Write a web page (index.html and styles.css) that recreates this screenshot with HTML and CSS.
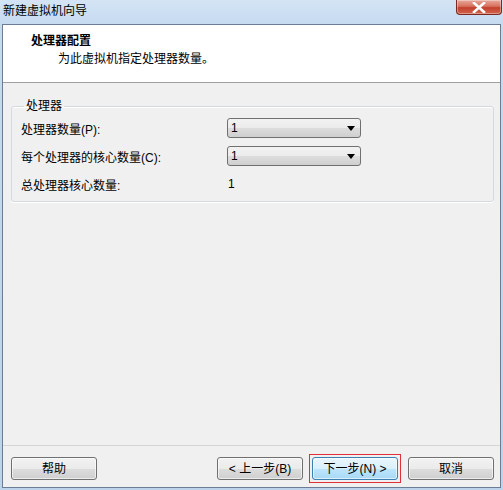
FILE: index.html
```html
<!DOCTYPE html>
<html lang="zh-CN">
<head>
<meta charset="utf-8">
<title>新建虚拟机向导</title>
<link rel="stylesheet" href="styles.css">
</head>
<body>
<div class="window">
  <div class="titlebar">
    <span class="title">新建虚拟机向导</span>
    <div class="close">
      <svg width="14" height="11" viewBox="0 0 14 11"><path d="M2 1 L12 10 M12 1 L2 10" stroke="#ffffff" stroke-width="2.6" stroke-linecap="square"/></svg>
    </div>
  </div>
  <div class="client">
    <div class="header">
      <div class="h-title">处理器配置</div>
      <div class="h-sub">为此虚拟机指定处理器数量。</div>
    </div>
    <div class="body">
      <fieldset class="group">
        <legend>处理器</legend>
        <div class="grid">
          <span class="lbl">处理器数量(P):</span>
          <div class="select"><span>1</span><svg width="8" height="5" viewBox="0 0 8 5"><path d="M0 0 H8 L4 5 Z" fill="#000"/></svg></div>
          <span class="lbl">每个处理器的核心数量(C):</span>
          <div class="select"><span>1</span><svg width="8" height="5" viewBox="0 0 8 5"><path d="M0 0 H8 L4 5 Z" fill="#000"/></svg></div>
          <span class="lbl">总处理器核心数量:</span>
          <span class="val">1</span>
        </div>
      </fieldset>
    </div>
    <div class="footer">
      <button class="btn">帮助</button>
      <div class="spacer"></div>
      <button class="btn">&lt; 上一步(B)</button>
      <button class="btn primary">下一步(N) &gt;</button>
      <button class="btn">取消</button>
    </div>
  </div>
</div>
</body>
</html>
```
FILE: styles.css
```css
* { box-sizing: border-box; }
html, body { margin: 0; padding: 0; }
body {
  width: 503px;
  height: 490px;
  overflow: hidden;
  font-family: "Liberation Sans", "Noto Sans CJK SC", sans-serif;
  font-size: 12px;
  color: #000;
}
.window {
  width: 503px;
  height: 490px;
  display: flex;
  flex-direction: column;
  background: linear-gradient(to bottom, #d4e4f5 0px, #c6daf0 24px, #bdd3ec 100%);
  padding: 0 2px 2px 2px;
}
.titlebar {
  height: 24px;
  display: flex;
  align-items: flex-start;
  flex: none;
}
.title {
  padding-left: 1px;
  padding-top: 3px;
  line-height: 16px;
  font-size: 12px;
  color: #000;
}
.close {
  margin-left: auto;
  margin-right: -1px;
  width: 46px;
  height: 15px;
  border: 1px solid #7a2a22;
  border-top: none;
  border-radius: 0 0 4px 4px;
  background: linear-gradient(to bottom, #e9a99b 0%, #d8705e 45%, #c2402c 55%, #d2654e 100%);
  display: flex;
  align-items: center;
  justify-content: center;
  box-shadow: inset 0 0 0 1px rgba(255,255,255,0.35);
}
.client {
  flex: 1;
  display: flex;
  flex-direction: column;
  border: 1px solid #6a7d94;
  background: #f0f0f0;
}
.header {
  height: 58px;
  flex: none;
  background: #ffffff;
  border-bottom: 1px solid #a0a0a0;
  padding: 8px 0 0 28px;
}
.h-title {
  font-weight: bold;
  line-height: 16px;
}
.h-sub {
  line-height: 16px;
  margin-top: 2px;
  padding-left: 27px;
}
.body {
  flex: 1;
  padding: 16px 6px 0 8px;
}
.group {
  margin: 0;
  padding: 5px 8px 7px 9px;
  border: 1px solid #d5dadf;
  border-radius: 3px;
  box-shadow: 0 1px 0 #ffffff, inset 0 1px 0 #ffffff;
}
.group legend {
  padding: 0 2px;
  margin-left: 3px;
  line-height: 14px;
}
.grid {
  display: grid;
  grid-template-columns: 206px 134px;
  grid-auto-rows: 20px;
  row-gap: 8px;
  align-items: center;
}
.select {
  height: 20px;
  border: 1px solid #707070;
  border-radius: 3px;
  background: linear-gradient(to bottom, #f2f2f2 0%, #ebebeb 50%, #dddddd 50%, #cfcfcf 100%);
  display: flex;
  align-items: center;
  justify-content: space-between;
  padding: 0 4px 0 3px;
}
.select svg { margin-right: 1px; }
.val { padding-left: 1px; }
.footer {
  height: 42px;
  flex: none;
  border-top: 1px solid #d5d5d5;
  display: flex;
  align-items: flex-start;
  padding: 11px 6px 0 8px;
  gap: 9px;
}
.spacer { flex: 1; }
.btn {
  width: 86px;
  height: 23px;
  font: inherit;
  color: #000;
  border: 1px solid #707070;
  border-radius: 3px;
  background: linear-gradient(to bottom, #f2f2f2 0%, #ebebeb 50%, #dddddd 50%, #cfcfcf 100%);
  box-shadow: inset 0 0 0 1px rgba(255,255,255,0.6);
  padding: 0;
  line-height: 20px;
}
.btn.primary {
  position: relative;
  border-color: #3c7fb1;
  background: linear-gradient(to bottom, #eaf6fd 0%, #d9f0fc 50%, #bee6fd 50%, #a7d9f5 100%);
  margin-right: 1px;
}
.btn.primary::after {
  content: "";
  position: absolute;
  top: -4px;
  left: -4px;
  right: -4px;
  bottom: -4px;
  border: 1px solid #e0303a;
}
```
